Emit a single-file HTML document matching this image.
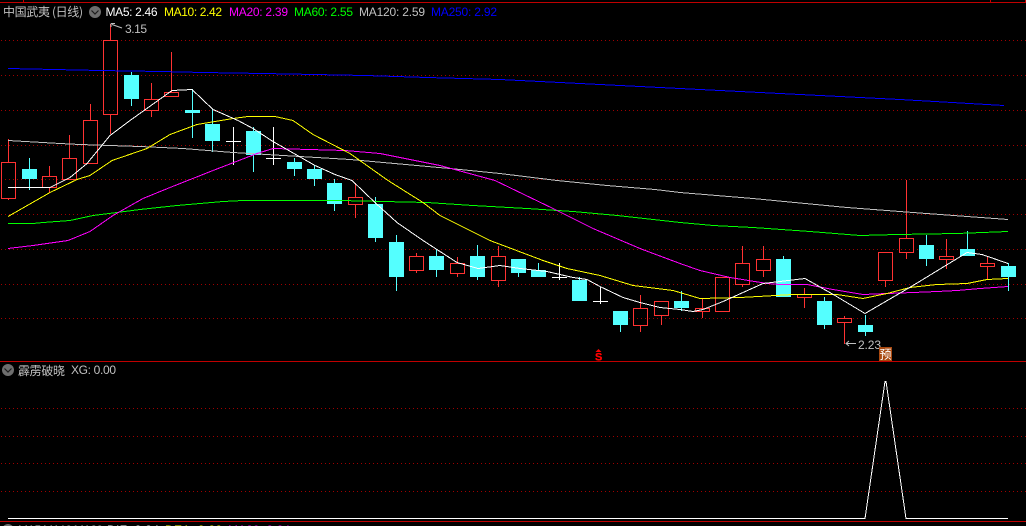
<!DOCTYPE html>
<html>
<head>
<meta charset="utf-8">
<style>
html,body{margin:0;padding:0;background:#000;width:1026px;height:526px;overflow:hidden}
svg{display:block}
text{font-family:"Liberation Sans","WenQuanYi Zen Hei","Noto Sans CJK SC",sans-serif;font-size:12px}
.c{font-family:"WenQuanYi Zen Hei","Noto Sans CJK SC","Liberation Sans",sans-serif}
</style>
</head>
<body>
<svg width="1026" height="526" viewBox="0 0 1026 526" xmlns="http://www.w3.org/2000/svg">
<defs>
<pattern id="d" width="4" height="1" patternUnits="userSpaceOnUse"><rect x="1" width="1" height="1" fill="#a00000"/></pattern>
</defs>
<rect width="1026" height="526" fill="#000"/>

<g fill="url(#d)" shape-rendering="crispEdges">
<rect x="0" y="40" width="1026" height="1"/>
<rect x="0" y="75" width="1026" height="1"/>
<rect x="0" y="110" width="1026" height="1"/>
<rect x="0" y="145" width="1026" height="1"/>
<rect x="0" y="179" width="1026" height="1"/>
<rect x="0" y="214" width="1026" height="1"/>
<rect x="0" y="249" width="1026" height="1"/>
<rect x="0" y="284" width="1026" height="1"/>
<rect x="0" y="318" width="1026" height="1"/>
<rect x="0" y="408" width="1026" height="1"/>
<rect x="0" y="436" width="1026" height="1"/>
<rect x="0" y="463" width="1026" height="1"/>
<rect x="0" y="491" width="1026" height="1"/>
</g>

<g stroke="#c00000" stroke-width="1" fill="none" shape-rendering="crispEdges">
<path d="M0 2.5H1026M23.5 0V2M990.5 0V2M1025.5 0V2M0 361.5H1026M0 521.5H1026"/>
</g>

<!-- cyan candles -->
<g shape-rendering="crispEdges">
<path stroke="#54ffff" fill="none" d="M29.5 158V190M131.5 72V106M192.5 89V138M212.5 109V152M253.5 127V172M294.5 158V176M314.5 165V186M334.5 179V211M375.5 197V242M396.5 235V291M436.5 249V277M477.5 245V280M518.5 259V277M538.5 263V277M579.5 277V301M620.5 311V332M681.5 291V311M783.5 256V297M824.5 297V329M865.5 315V336M926.5 235V266M967.5 231V256M1008.5 263V291"/>
<path fill="#54ffff" d="M22 169h15V179h-15zM124 75h15V99h-15zM185 110h15V113h-15zM205 124h15V141h-15zM246 131h15V155h-15zM287 162h15V169h-15zM307 169h15V179h-15zM327 183h15V204h-15zM368 204h15V238h-15zM389 242h15V277h-15zM429 256h15V270h-15zM470 256h15V277h-15zM511 259h15V273h-15zM531 270h15V277h-15zM572 280h15V301h-15zM613 311h15V325h-15zM674 301h15V308h-15zM776 259h15V297h-15zM817 301h15V325h-15zM858 325h15V332h-15zM919 245h15V259h-15zM960 249h15V256h-15zM1001 266h15V277h-15z"/>
<!-- white doji -->
<path stroke="#ffffff" fill="none" d="M233.5 127V165M226 141.5H241M273.5 127V165M266 158.5H281M559.5 263V280M552 277.5H567M600.5 287V304M593 301.5H608"/>
<!-- red candles -->
<path stroke="#ff3232" fill="none" d="M1.5 162.5H15.5V198.5H1.5ZM8.5 139V162M8.5 199V200
M42.5 176.5H56.5V187.5H42.5ZM49.5 166V176M49.5 188V193
M62.5 158.5H76.5V179.5H62.5ZM69.5 135V158
M83.5 120.5H97.5V163.5H83.5ZM90.5 104V120
M103.5 40.5H117.5V114.5H103.5ZM110.5 24V40M110.5 115V134
M144.5 99.5H158.5V110.5H144.5ZM151.5 83V99M151.5 111V117
M164.5 92.5H178.5V96.5H164.5ZM171.5 52V92
M348.5 197.5H362.5V204.5H348.5ZM355.5 183V197M355.5 205V218
M409.5 256.5H423.5V270.5H409.5ZM416.5 253V256M416.5 271V273
M450.5 263.5H464.5V273.5H450.5ZM457.5 257V263M457.5 274V277
M491.5 256.5H505.5V280.5H491.5ZM498.5 246V256M498.5 281V287
M633.5 308.5H647.5V325.5H633.5ZM640.5 295V308M640.5 326V332
M654.5 301.5H668.5V315.5H654.5ZM661.5 316V325
M695.5 308.5H709.5V311.5H695.5ZM702.5 299V308M702.5 312V318
M715.5 277.5H729.5V311.5H715.5Z
M735.5 263.5H749.5V284.5H735.5ZM742.5 246V263M742.5 285V287
M756.5 259.5H770.5V270.5H756.5ZM763.5 246V259M763.5 271V277
M797.5 294.5H811.5V297.5H797.5ZM804.5 288V294M804.5 298V308
M837.5 318.5H851.5V322.5H837.5ZM844.5 316V318M844.5 323V344
M878.5 252.5H892.5V280.5H878.5ZM885.5 281V287
M899.5 238.5H913.5V252.5H899.5ZM906.5 180V238M906.5 253V259
M939.5 256.5H953.5V259.5H939.5ZM946.5 239V256M946.5 260V269
M980.5 263.5H994.5V266.5H980.5ZM987.5 257V263M987.5 267V279"/>
</g>

<!-- moving averages -->
<g fill="none" stroke-width="1" shape-rendering="crispEdges">
<polyline stroke="#0000ff" points="8,68.5 100,70.5 160,71.5 203,72.5 263,73.5 365,75.5 427,77.5 500,79.5 600,84.5 700,89.5 800,94.5 900,99.5 1004,105.5"/>
<polyline stroke="#c0c0c0" points="8,140.5 60,143.5 80,144.5 140,146.5 183,148.5 233,152.5 300,156.5 350,159.5 450,168.5 500,173.5 557,180.5 607,185.5 655,189.5 680,192.5 753,198.5 847,207.5 913,212.5 1008,219.5"/>
<polyline stroke="#00ff00" points="8,223.5 33,223.5 43,222.5 70,220.5 93,215.5 117,212.5 140,209.5 177,205.5 223,201.5 243,200.5 340,200.5 427,202.5 473,205.5 527,208.5 573,211.5 617,215.5 680,222.5 713,225.5 753,227.5 810,231.5 860,235.5 897,234.5 957,233.5 1008,231.5"/>
<polyline stroke="#ff00ff" points="8,248.5 33,245.5 68,240.5 90,231.5 113,215.5 143,198.5 170,187.5 213,170.5 257,153.5 273,148.5 345,150.5 380,153.5 440,165.5 495,180.5 553,208.5 593,228.5 640,248.5 680,263.5 700,270.5 730,277.5 767,283.5 780,284.5 807,284.5 833,289.5 863,294.5 887,293.5 913,292.5 937,291.5 957,290.5 980,288.5 1008,286.5"/>
<polyline stroke="#ffff00" points="8,216.5 50,192.5 77,179.5 90,175.5 112,160.5 147,148.5 170,134.5 197,124.5 233,118.5 248,116.5 275,116.5 293,120.5 313,134.5 350,153.5 388,180.5 423,202.5 440,215.5 490,240.5 543,260.5 567,268.5 600,275.5 633,285.5 673,290.5 700,298.5 740,297.5 758,296.5 793,294.5 837,294.5 863,298.5 887,293.5 910,287.5 937,284.5 967,283.5 987,279.5 1008,278.5"/>
<polyline stroke="#ffffff" points="8,187.5 50,187.5 70,177.5 87,163.5 110,135.5 130,120.5 172,90.5 192,89.5 213,109.5 238,120.5 253,128.5 273,141.5 294,153.5 315,165.5 335,174.5 352,180.5 376,203.5 397,222.5 423,240.5 457,262.5 478,268.5 500,265.5 520,268.5 547,271.5 573,277.5 587,279.5 600,286.5 623,297.5 640,302.5 660,307.5 680,309.5 693,311.5 703,309.5 723,301.5 763,283.5 780,281.5 805,278.5 835,295.5 865,313.5 913,285.5 967,252.5 982,254.5 1008,263.5"/>
<!-- lower panel -->
<polyline stroke="#ffffff" points="8,518.5 865,518.5 885,381.5 886,381.5 906,518.5 1008,518.5"/>
</g>

<!-- header -->
<text class="c" x="3" y="16" fill="#c0c0c0" textLength="80" lengthAdjust="spacing">中国武夷 (日线)</text>
<circle cx="95" cy="12" r="6" fill="#6e6e6e"/>
<path d="M91.5 10.5L95 14L98.5 10.5" fill="none" stroke="#1c1c1c" stroke-width="1.2"/>
<text x="105.5" y="16" fill="#ffffff" textLength="52" lengthAdjust="spacing">MA5: 2.46</text>
<text x="164" y="16" fill="#ffff00" textLength="58" lengthAdjust="spacing">MA10: 2.42</text>
<text x="229" y="16" fill="#ff00ff" textLength="59" lengthAdjust="spacing">MA20: 2.39</text>
<text x="294" y="16" fill="#00ff00" textLength="59" lengthAdjust="spacing">MA60: 2.55</text>
<text x="359" y="16" fill="#c0c0c0" textLength="66" lengthAdjust="spacing">MA120: 2.59</text>
<text x="431" y="16" fill="#0000ff" textLength="66" lengthAdjust="spacing">MA250: 2.92</text>

<!-- high marker -->
<path d="M111 23.5H115M111 23.5V27M112 24.5L122 28" fill="none" stroke="#c0c0c0" stroke-width="1"/>
<text x="125" y="33" fill="#c0c0c0" textLength="22" lengthAdjust="spacing">3.15</text>

<!-- low marker -->
<path d="M856 343.5H846M849 341L846 343.5L849 346" fill="none" stroke="#c0c0c0" stroke-width="1"/>
<text x="858" y="349" fill="#c0c0c0" textLength="23" lengthAdjust="spacing">2.23</text>

<!-- badge -->
<rect x="879" y="347" width="13" height="14" fill="#a8480f"/>
<text class="c" x="879.5" y="358.5" fill="#ffffff" style="font-size:12px">预</text>

<!-- S marker -->
<path d="M598.5 349L601.5 352H595.5Z" fill="#ff0000"/>
<text x="595" y="360.5" fill="#ff0000" stroke="#ff0000" stroke-width="0.3" style="font-size:11px;font-weight:bold">S</text>

<!-- lower panel header -->
<circle cx="8" cy="370" r="6" fill="#6e6e6e"/>
<path d="M4.5 368.5L8 372L11.5 368.5" fill="none" stroke="#1c1c1c" stroke-width="1.2"/>
<text class="c" x="18" y="375" fill="#c0c0c0" textLength="47" lengthAdjust="spacing">霹雳破晓</text>
<text x="71" y="374" fill="#c0c0c0" textLength="45" lengthAdjust="spacing">XG: 0.00</text>

<!-- clipped bottom row -->
<circle cx="8" cy="530" r="6" fill="#6e6e6e"/>
<text x="18" y="534" fill="#c0c0c0" textLength="85" lengthAdjust="spacing">MA5 MA10 MA20</text>
<text x="107" y="534" fill="#ffffff" textLength="52" lengthAdjust="spacing">DIF: 2.34</text>
<text x="165" y="534" fill="#ffff00" textLength="57" lengthAdjust="spacing">DEA: 2.22</text>
<text x="228" y="534" fill="#ff00ff" textLength="62" lengthAdjust="spacing">MA20: 2.24</text>
</svg>
</body>
</html>
